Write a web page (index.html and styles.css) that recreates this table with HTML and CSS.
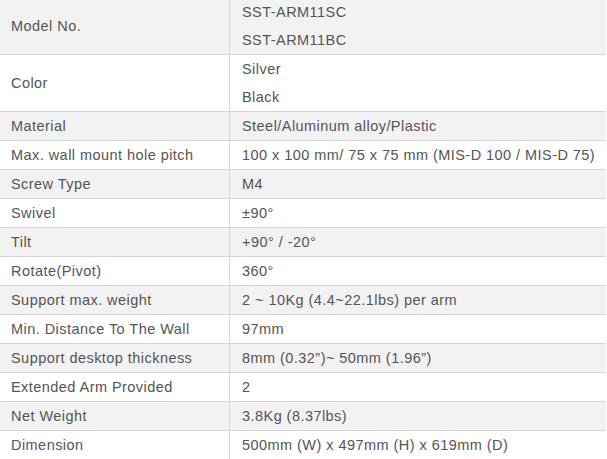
FILE: index.html
```html
<!DOCTYPE html>
<html lang="en">
<head>
<meta charset="utf-8">
<title>Specifications</title>
<link rel="stylesheet" href="styles.css">
</head>
<body>
<table class="spec">
  <tbody>
    <tr class="alt"><td class="label">Model No.</td><td class="value"><div>SST-ARM11SC</div><div>SST-ARM11BC</div></td></tr>
    <tr><td class="label">Color</td><td class="value"><div>Silver</div><div>Black</div></td></tr>
    <tr class="alt"><td class="label">Material</td><td class="value">Steel/Aluminum alloy/Plastic</td></tr>
    <tr><td class="label">Max. wall mount hole pitch</td><td class="value">100 x 100 mm/ 75 x 75 mm (MIS-D 100 / MIS-D 75)</td></tr>
    <tr class="alt"><td class="label">Screw Type</td><td class="value">M4</td></tr>
    <tr><td class="label">Swivel</td><td class="value">±90°</td></tr>
    <tr class="alt"><td class="label">Tilt</td><td class="value">+90° / -20°</td></tr>
    <tr><td class="label">Rotate(Pivot)</td><td class="value">360°</td></tr>
    <tr class="alt"><td class="label">Support max. weight</td><td class="value">2 ~ 10Kg (4.4~22.1lbs) per arm</td></tr>
    <tr><td class="label">Min. Distance To The Wall</td><td class="value">97mm</td></tr>
    <tr class="alt"><td class="label">Support desktop thickness</td><td class="value">8mm (0.32”)~ 50mm (1.96”)</td></tr>
    <tr><td class="label">Extended Arm Provided</td><td class="value">2</td></tr>
    <tr class="alt"><td class="label">Net Weight</td><td class="value">3.8Kg (8.37lbs)</td></tr>
    <tr><td class="label">Dimension</td><td class="value">500mm (W) x 497mm (H) x 619mm (D)</td></tr>
  </tbody>
</table>
</body>
</html>
```

FILE: styles.css
```css
html, body {
  margin: 0;
  padding: 0;
  background: #ffffff;
}

body {
  font-family: "Liberation Sans", Arial, sans-serif;
  font-size: 14.5px;
  color: #555555;
  overflow: hidden;
}

.spec {
  width: 606px;
  margin-top: -2px;
  border-collapse: collapse;
  table-layout: fixed;
  letter-spacing: 0.45px;
}

.spec td {
  padding: 0 0 0 11px;
  line-height: 28px;
  border-bottom: 1px solid #d6d6d6;
  vertical-align: middle;
  white-space: nowrap;
}

.spec .label {
  width: 218px;
  border-right: 1px solid #d6d6d6;
}

.spec .value {
  padding-left: 12px;
}

.spec .alt td {
  background: #f2f2f2;
}
```
